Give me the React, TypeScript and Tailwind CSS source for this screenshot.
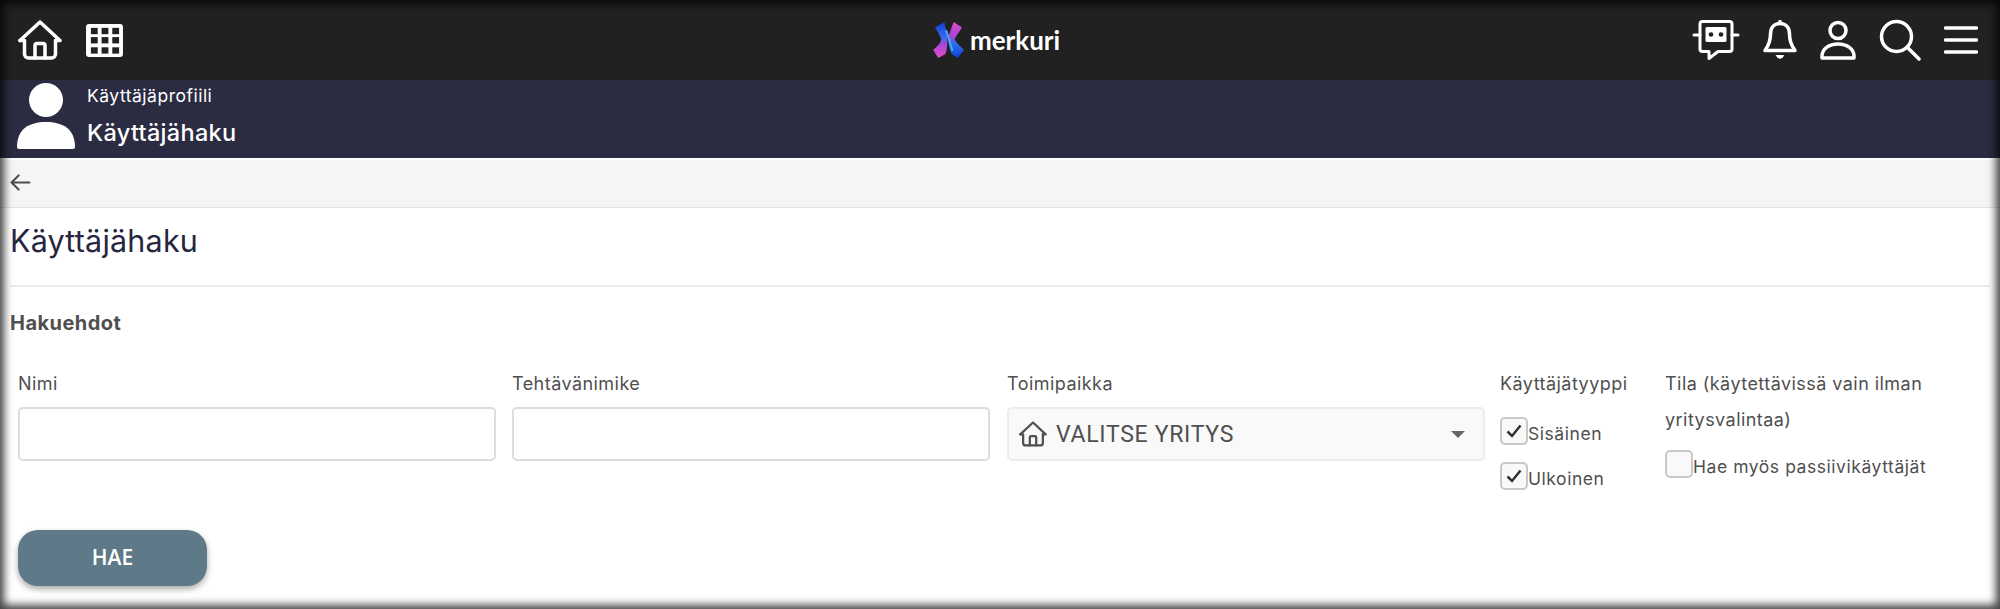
const font = { fontFamily: "'Inter', 'Noto Sans', sans-serif" };

function Home({ className = "", sw = 3.5 }: { className?: string; sw?: number }) {
  return (
    <svg viewBox="0 0 44 40" fill="none" stroke="currentColor" strokeWidth={sw} strokeLinejoin="round" strokeLinecap="round" className={className}>
      <path d="M2 20.500 22 2l20 18.500h-4.500" />
      <path d="M2 20.500h4.500V34a4 4 0 0 0 4 4h23a4 4 0 0 0 4-4V20.500" />
      <path d="M17 38V25.500a2 2 0 0 1 2-2h6a2 2 0 0 1 2 2V38" />
    </svg>
  );
}

function GridIcon() {
  return (
    <svg viewBox="0 0 40 36" className="w-[39px] h-[35px]" fill="none">
      <rect x="1" y="1" width="38" height="34" rx="3" fill="#fff" />
      {[5, 14.500, 25].map((y) =>
        [6, 17, 28].map((x) => <rect key={`${x}-${y}`} x={x} y={y} width="7" height="6.500" fill="#212121" />)
      )}
    </svg>
  );
}

function Logo() {
  return (
    <svg viewBox="0 0 30 35" className="w-[31px] h-[36px]">
      <defs>
        <linearGradient id="lg1" x1="0" y1="0" x2="0" y2="1">
          <stop offset="0" stopColor="#0f3fd8" />
          <stop offset="0.45" stopColor="#3a6cf0" />
          <stop offset="0.6" stopColor="#a445dc" />
          <stop offset="1" stopColor="#e64cc0" />
        </linearGradient>
        <linearGradient id="lg2" x1="0" y1="0" x2="0" y2="1">
          <stop offset="0" stopColor="#e64cc0" />
          <stop offset="0.4" stopColor="#a445dc" />
          <stop offset="0.6" stopColor="#2a72ee" />
          <stop offset="1" stopColor="#0f3fd0" />
        </linearGradient>
      </defs>
      <path d="M2 5 11 0C12 7 14 12 14 17 14 23 13 29 12 31L5 35 0 27C4 24 7 21 8 17 7 13 4 9 2 5Z" fill="url(#lg1)" />
      <path d="M20 0 28 5C26 10 22 13 21 17 23 21 27 24 30 27L24 35 18 31C16 27 15 22 15 17 15 12 18 6 20 0Z" fill="url(#lg2)" />
      <path d="M12.500 8C15 13 16 21 19 28" stroke="#4aa8f5" strokeWidth="2" fill="none" />
    </svg>
  );
}

function Robot() {
  return (
    <svg viewBox="0 0 48 40" className="w-[48px] h-[40px]" fill="none" stroke="#fff" strokeWidth="3" strokeLinecap="round" strokeLinejoin="round">
      <path d="M8 4a2.500 2.500 0 0 1 2.500-2.500h27A2.500 2.500 0 0 1 40 4v25a2.500 2.500 0 0 1-2.500 2.500H26l-9 7v-7h-6.500A2.500 2.500 0 0 1 8 29Z" />
      <path d="M2 15H8M40 15h6" />
      <rect x="13.500" y="7" width="21" height="15" rx="1.500" fill="#fff" stroke="none" />
      <circle cx="19" cy="14.500" r="2.300" fill="#212121" stroke="none" />
      <circle cx="29" cy="14.500" r="2.300" fill="#212121" stroke="none" />
    </svg>
  );
}

function Bell() {
  return (
    <svg viewBox="0 0 34 40" className="w-[34px] h-[40px]" fill="none" stroke="#fff" strokeWidth="3.500" strokeLinecap="round" strokeLinejoin="round">
      <path d="M17 3.500c-6 0-9.500 4.500-9.500 10.500 0 7-1.500 11-5.500 16.500h30c-4-5.500-5.500-9.500-5.500-16.500 0-6-3.500-10.500-9.500-10.500Z" />
      <path d="M17 1.500v2" />
      <path d="M13.500 35.500h7a3.600 3.600 0 0 1-7 0Z" fill="#fff" strokeWidth="1" />
    </svg>
  );
}

function User() {
  return (
    <svg viewBox="0 0 36 40" className="w-[36px] h-[40px]" fill="none" stroke="#fff" strokeWidth="3.500" strokeLinejoin="round">
      <circle cx="18" cy="10.500" r="8" />
      <path d="M2 38v-2c0-7 7-12 16-12s16 5 16 12v2Z" />
    </svg>
  );
}

function Search() {
  return (
    <svg viewBox="0 0 42 42" className="w-[42px] h-[42px]" fill="none" stroke="#fff" strokeWidth="3.500" strokeLinecap="round">
      <circle cx="17.500" cy="17.500" r="15" />
      <path d="M28.500 28.500 40 40" />
    </svg>
  );
}

function Menu() {
  return (
    <svg viewBox="0 0 34 28" className="w-[34px] h-[28px]" fill="none" stroke="#fff" strokeWidth="3.500" strokeLinecap="round">
      <path d="M1.500 2h31M1.500 14h31M1.500 26h31" />
    </svg>
  );
}

function Check({ checked, label }: { checked: boolean; label: string }) {
  return (
    <div className="flex items-start h-[45px]">
      <span className="flex items-center justify-center w-[28px] h-[28px] rounded-[5px] border-2 border-[#c8c8c8] bg-[#f9f9f9] shrink-0">
        {checked && (
          <svg viewBox="0 0 16 14" className="w-[16px] h-[14px]" fill="none" stroke="#333" strokeWidth="2.500">
            <path d="M1.500 7.500 6 12 14.500 1.500" />
          </svg>
        )}
      </span>
      <span className="text-[17.500px] tracking-[0.55px] mt-[6px] leading-[22px] whitespace-nowrap">{label}</span>
    </div>
  );
}

export default function App() {
  return (
    <div style={font} className="relative w-[2000px] h-[609px] bg-white overflow-hidden text-[#4f4f4f]">
      <header className="flex items-center h-[80px] bg-[#212121] pl-[18px] pr-[22px] text-white">
        <div className="flex flex-1 items-center gap-[23px]">
          <Home className="w-[44px] h-[40px]" />
          <GridIcon />
        </div>
        <div className="flex items-center gap-[6px] mr-[3px]">
          <Logo />
          <span className="text-[26px] font-bold leading-none" style={{ fontFamily: "'Lato', sans-serif" }}>merkuri</span>
        </div>
        <div className="flex flex-1 items-center justify-end gap-[23px]">
          <Robot />
          <Bell />
          <User />
          <Search />
          <Menu />
        </div>
      </header>

      <section className="flex h-[78px] bg-[#2b2b42] text-white pl-[16px]">
        <svg viewBox="0 0 60 68" className="w-[60px] h-[68px] mt-[2px]" fill="#fff">
          <circle cx="30" cy="18" r="17" />
          <path d="M1 65c0-18 12-25 29-25s29 7 29 25a2 2 0 0 1-2 2H3a2 2 0 0 1-2-2Z" />
        </svg>
        <div className="ml-[11px] flex flex-col">
          <span className="text-[17.500px] tracking-[0.5px] leading-[20px] mt-[6px]">Käyttäjäprofiili</span>
          <span className="text-[23.500px] font-medium tracking-[0.3px] leading-[28px] mt-[13px]">Käyttäjähaku</span>
        </div>
      </section>

      <div className="h-[2px] bg-white" />
      <div className="flex items-start h-[48px] bg-[#f5f5f5] border-b border-[#e4e4e4] pl-[10px] pt-[14px]">
        <svg viewBox="0 0 22 18" className="w-[21px] h-[17px]" fill="none" stroke="#4f4f4f" strokeWidth="2.200" strokeLinecap="round" strokeLinejoin="round">
          <path d="M9 1.500 1.500 9 9 16.500M1.500 9H20.500" />
        </svg>
      </div>

      <main className="px-[10px]">
        <h1 className="text-[30.500px] font-normal tracking-[0.2px] leading-[36px] text-[#262640] mt-[15px] pb-[26px] border-b-2 border-[#ececec]">Käyttäjähaku</h1>
        <h2 className="text-[20px] font-bold tracking-[0.45px] leading-[24px] mt-[24px]">Hakuehdot</h2>

        <div className="grid grid-cols-[494px_494px_494px_165px_1fr] pl-[8px] mt-[37px] text-[18px] tracking-[0.45px]">
          <div>
            <label className="block leading-[24px] h-[35px]">Nimi</label>
            <input className="block w-[478px] h-[54px] rounded-[5px] border-2 border-[#dcdcdc] bg-white" />
          </div>
          <div>
            <label className="block leading-[24px] h-[35px]">Tehtävänimike</label>
            <input className="block w-[478px] h-[54px] rounded-[5px] border-2 border-[#dcdcdc] bg-white" />
          </div>
          <div>
            <label className="block ml-px leading-[24px] h-[35px]">Toimipaikka</label>
            <div className="flex items-center ml-px w-[478px] h-[54px] rounded-[5px] border-2 border-[#ececec] bg-[#f9f9f9] pl-[10px] pr-[18px]">
              <Home className="w-[28px] h-[26px] text-[#4f4f4f]" />
              <span className="ml-[9px] text-[23px] tracking-[0.7px] leading-none" style={{ fontFamily: "'Roboto', sans-serif" }}>VALITSE YRITYS</span>
              <span className="ml-auto w-0 h-0 border-x-[7px] border-x-transparent border-t-[7px] border-t-[#666]" />
            </div>
          </div>
          <div>
            <label className="block leading-[24px] h-[45px] whitespace-nowrap">Käyttäjätyyppi</label>
            <Check checked label="Sisäinen" />
            <Check checked label="Ulkoinen" />
          </div>
          <div>
            <label className="block leading-[36px] whitespace-nowrap -mt-[6px]">Tila (käytettävissä vain ilman<br />yritysvalintaa)</label>
            <div className="mt-[12px]">
              <Check checked={false} label="Hae myös passiivikäyttäjät" />
            </div>
          </div>
        </div>

        <button className="block ml-[8px] mt-[23px] w-[189px] h-[56px] rounded-[20px] bg-[#5e7a88] text-white text-[21px] font-semibold shadow-[0_3px_6px_rgba(0,0,0,0.35)]" style={{ fontFamily: "'Open Sans', sans-serif" }}>
          HAE
        </button>
      </main>

      <div className="absolute inset-0 pointer-events-none shadow-[inset_0_0_9px_4px_rgba(0,0,0,0.75)]" />
    </div>
  );
}
